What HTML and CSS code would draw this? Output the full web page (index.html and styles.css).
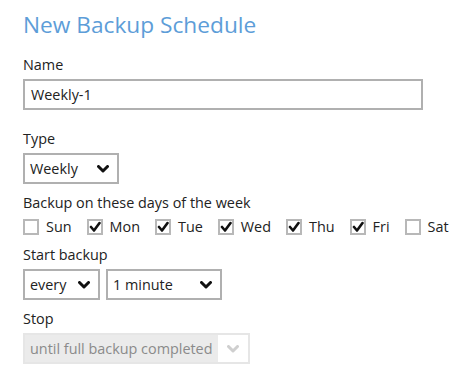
FILE: index.html
```html
<!DOCTYPE html>
<html lang="en">
<head>
    <meta charset="UTF-8">
    <title>New Backup Schedule</title>
    <link rel="stylesheet" href="styles.css">
</head>
<body>
<div class="schedule">
    <h1 class="title">New Backup Schedule</h1>

    <div class="field field-name">
        <label class="label">Name</label>
        <div class="text-input">Weekly-1</div>
    </div>

    <div class="field">
        <label class="label">Type</label>
        <div class="select select-type">
            <span>Weekly</span>
            <svg class="chev" width="12" height="8" viewBox="0 0 12 8"><polyline points="1.5,1.5 6,6 10.5,1.5" /></svg>
        </div>
    </div>

    <div class="field">
        <label class="label">Backup on these days of the week</label>
        <div class="days">
            <span class="day"><span class="box"></span>Sun</span>
            <span class="day"><span class="box"><svg width="12" height="12" viewBox="0 0 12 12"><polyline points="2,6 5,9.5 10.5,2" /></svg></span>Mon</span>
            <span class="day"><span class="box"><svg width="12" height="12" viewBox="0 0 12 12"><polyline points="2,6 5,9.5 10.5,2" /></svg></span>Tue</span>
            <span class="day"><span class="box"><svg width="12" height="12" viewBox="0 0 12 12"><polyline points="2,6 5,9.5 10.5,2" /></svg></span>Wed</span>
            <span class="day"><span class="box"><svg width="12" height="12" viewBox="0 0 12 12"><polyline points="2,6 5,9.5 10.5,2" /></svg></span>Thu</span>
            <span class="day"><span class="box"><svg width="12" height="12" viewBox="0 0 12 12"><polyline points="2,6 5,9.5 10.5,2" /></svg></span>Fri</span>
            <span class="day"><span class="box"></span>Sat</span>
        </div>
    </div>

    <div class="field">
        <label class="label">Start backup</label>
        <div class="row">
            <div class="select select-every">
                <span>every</span>
                <svg class="chev" width="12" height="8" viewBox="0 0 12 8"><polyline points="1.5,1.5 6,6 10.5,1.5" /></svg>
            </div>
            <div class="select select-interval">
                <span>1 minute</span>
                <svg class="chev" width="12" height="8" viewBox="0 0 12 8"><polyline points="1.5,1.5 6,6 10.5,1.5" /></svg>
            </div>
        </div>
    </div>

    <div class="field">
        <label class="label">Stop</label>
        <div class="select select-stop disabled">
            <span>until full backup completed</span>
            <span class="arrow-cell"><svg class="chev" width="12" height="8" viewBox="0 0 12 8"><polyline points="1.5,1.5 6,6 10.5,1.5" /></svg></span>
        </div>
    </div>
</div>
</body>
</html>
```

FILE: styles.css
```css
body {
    margin: 0;
    background-color: #ffffff;
    font-family: "Open Sans", "Noto Sans", sans-serif;
    color: #222222;
}

.schedule {
    padding: 8px 0 0 23px;
}

.title {
    margin: 0 0 13px 0;
    font-size: 22.7px;
    font-weight: normal;
    line-height: 34px;
    color: #5d9dd8;
}

.field {
    margin-bottom: 9px;
}

.field-name {
    margin-bottom: 19px;
}

.label {
    display: block;
    font-size: 14.4px;
    line-height: 19px;
    margin-bottom: 5px;
}

.text-input {
    width: 400px;
    height: 31px;
    box-sizing: border-box;
    border: 2px solid #b0b0b0;
    padding: 0 6px;
    font-size: 14.4px;
    line-height: 27px;
}

.select {
    display: flex;
    align-items: center;
    justify-content: space-between;
    height: 31px;
    box-sizing: border-box;
    border: 2px solid #b0b0b0;
    padding: 0 8px 0 5px;
    font-size: 14.4px;
}

.chev polyline {
    fill: none;
    stroke: #111111;
    stroke-width: 3;
    stroke-linecap: round;
    stroke-linejoin: round;
}

.select-type {
    width: 96px;
}

.row {
    display: flex;
    gap: 6px;
}

.select-every {
    width: 77px;
}

.select-interval {
    width: 116px;
}

.select-stop {
    width: 227px;
    padding: 0;
    border-color: #e6e6e6;
    background-color: #ebebeb;
    color: #8a8a8a;
}

.select-stop > span:first-child {
    padding-left: 5px;
}

.arrow-cell {
    display: flex;
    align-items: center;
    justify-content: center;
    width: 30px;
    height: 100%;
    background-color: #ffffff;
}

.select-stop .chev polyline {
    stroke: #cfcfcf;
}

.days {
    display: flex;
    align-items: center;
    margin-top: 3px;
    font-size: 14.4px;
}

.day {
    display: inline-flex;
    align-items: center;
    gap: 7px;
    margin-right: 15px;
}

.box {
    display: inline-flex;
    align-items: center;
    justify-content: center;
    width: 16px;
    height: 16px;
    box-sizing: border-box;
    border: 2px solid #b8b8b8;
}

.box polyline {
    fill: none;
    stroke: #111111;
    stroke-width: 2.6;
    stroke-linecap: round;
    stroke-linejoin: round;
}
```
